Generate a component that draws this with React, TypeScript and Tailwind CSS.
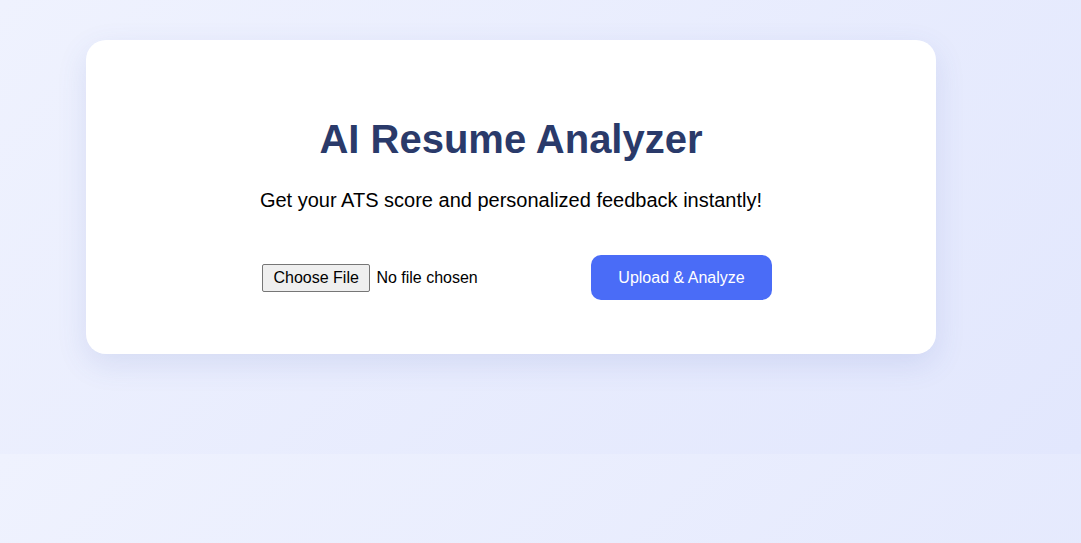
import React from 'react';

export default function App() {
  return (
    <div
      className="min-h-[543px] w-full bg-[linear-gradient(135deg,#eff2fe,#e2e7fd)] bg-[length:100%_454px] bg-repeat font-['Liberation_Sans',Arial,sans-serif]"
    >
      <div className="pt-[40px] pl-[86px]">
        <div className="w-[850px] h-[314px] rounded-[20px] bg-white shadow-[0_10px_30px_rgba(70,90,180,0.13)] flex flex-col items-center">
          <h1 className="mt-[76px] text-[40px] leading-[46px] font-bold text-[#2a3a6a]">
            AI Resume Analyzer
          </h1>
          <p className="mt-[26px] text-[20px] leading-[24px] text-black">
            Get your ATS score and personalized feedback instantly!
          </p>
          <div className="mt-[43px] w-full flex items-center pl-[176px]">
            <input
              type="file"
              className="w-[329px] text-[16px] text-black file:mr-[6px] file:border file:border-[#767676] file:bg-[#efefef] file:rounded-[2px] file:px-[10.5px] file:py-[1px] file:text-black"
            />
            <button className="h-[45px] w-[181px] rounded-[10px] bg-[#4a6cf7] text-white text-[16px]">
              Upload &amp; Analyze
            </button>
          </div>
        </div>
      </div>
    </div>
  );
}
